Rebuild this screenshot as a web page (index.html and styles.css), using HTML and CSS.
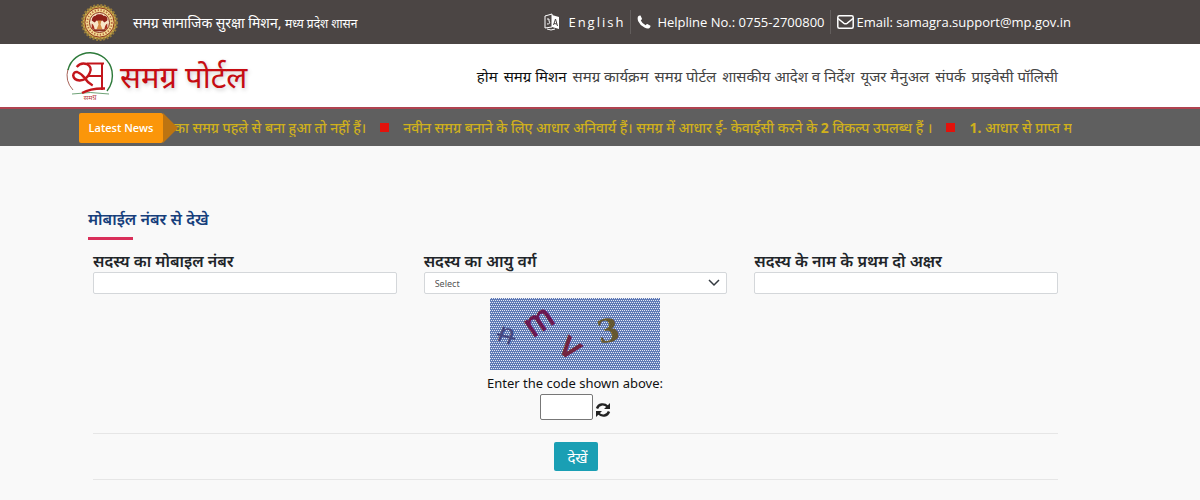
FILE: index.html
```html
<!DOCTYPE html>
<html lang="hi">
<head>
    <meta charset="UTF-8">
    <meta name="viewport" content="width=device-width, initial-scale=1.0">
    <title>समग्र पोर्टल</title>
    <link rel="stylesheet" href="styles.css">
</head>
<body>
    <!-- Top bar -->
    <div class="topbar">
        <div class="mission">
            <svg class="seal" viewBox="0 0 40 40" aria-hidden="true">
                <circle cx="20" cy="20" r="17.5" fill="#c9a94a" stroke="#94793a" stroke-width="3" stroke-dasharray="2 1.6"/>
                <circle cx="20" cy="20" r="15" fill="#f3dc93" stroke="#8b2f1c" stroke-width="1"/>
                <circle cx="20" cy="20" r="12.6" fill="none" stroke="#b9683f" stroke-width="1.8" stroke-dasharray="1.4 1.6"/>
                <circle cx="20" cy="20" r="10.3" fill="#f8e6c8" stroke="#8b2f1c" stroke-width="1"/>
                <path d="M12 18c0-3 2-5 4-5 1-2 7-2 8 0 3 0 5 2 4 5l-3 2-2-2-3 1-3-1-2 2z" fill="#8f2019"/>
                <path d="M12 21c2 1 3 4 3 7l-3-2zM28 21c-2 1-3 4-3 7l3-2z" fill="#a9301f"/>
                <path d="M18 18h4l-1 4 2 5h-6l2-5z" fill="#d68c45"/>
                <path d="M14 28h12" stroke="#8b2f1c" stroke-width="2"/>
            </svg>
            <span>समग्र सामाजिक सुरक्षा मिशन, <small>मध्य प्रदेश शासन</small></span>
        </div>
        <ul class="contact">
            <li>
                <a class="language" href="#">
                    <svg class="lang-icon" viewBox="0 0 16 18" aria-hidden="true">
                        <path d="M1 3l7-2v13l-7 1z" fill="none" stroke="#fff"/>
                        <path d="M8 2l7 2v12l-7-2z" fill="#fff"/>
                        <path d="M3 6q3-1 2 2 2 3-2 3" fill="none" stroke="#fff"/>
                        <path d="M9.500 12l2-6 2 7M10 10.500l3 .5" fill="none" stroke="#4b4544"/>
                        <path d="M3 16q4 2 8 0" fill="none" stroke="#fff"/>
                    </svg>
                    English
                </a>
            </li>
            <li>
                <svg class="phone-icon" viewBox="0 0 14 14" aria-hidden="true">
                    <path d="M1 1.500Q2 .3 3.500.5L5 3.800Q5 4.500 3.800 5.500 5.500 9 8.700 10.300 9.500 9 10.300 9l3.200 1.700Q13.700 12 12.500 13 10.500 14.200 7.500 12.600 2.800 10 1.200 6.200.2 3.500 1 1.500z" fill="#fff"/>
                </svg>
                Helpline No.: 0755-2700800
            </li>
            <li>
                <svg class="mail-icon" viewBox="0 0 17 14" aria-hidden="true">
                    <rect x=".8" y=".8" width="15.400" height="12.400" rx="1.500" fill="none" stroke="#fff" stroke-width="1.500"/>
                    <path d="M1 3.500l6 4.800q1.500 1 3 0l6-4.800" fill="none" stroke="#fff" stroke-width="1.500"/>
                </svg>
                Email: samagra.support@mp.gov.in
            </li>
        </ul>
    </div>

    <!-- Logo and menu -->
    <header class="header">
        <a class="brand" href="#">
            <svg class="logo" viewBox="0 0 48 50" aria-hidden="true">
                <path d="M7 39A22 22 0 0 1 2 18" fill="none" stroke="#a9645a" stroke-width="1"/>
                <path d="M2 19A22.500 22.500 0 0 1 46 20Q48 31 41 40" fill="none" stroke="#2d7a3a" stroke-width="1.400"/>
                <path d="M6 43q18-3 37 0" fill="none" stroke="#6fa377" stroke-width="1"/>
                <g fill="none" stroke="#c3161c" stroke-width="2.400">
                    <path d="M10.700 16q4-5 10-3 6 3 3 9-3 7-10 7.500-6-.5-6.500-5 .5-4 4-3.500 5 2 7.500 6 3 5 8 7.500"/>
                    <path d="M21 12.500h17M22 25h14M36 12v27" stroke-width="2"/>
                    <path d="M16 42q9-5 23-4.500"/>
                </g>
                <text class="logo-text" x="24" y="49" text-anchor="middle">समग्र</text>
            </svg>
            <span class="brand-name">समग्र पोर्टल</span>
        </a>
        <nav class="menu">
            <a class="active" href="#">होम</a>
            <a class="active" href="#">समग्र मिशन</a>
            <a href="#">समग्र कार्यक्रम</a>
            <a href="#">समग्र पोर्टल</a>
            <a href="#">शासकीय आदेश व निर्देश</a>
            <a href="#">यूजर मैनुअल</a>
            <a href="#">संपर्क</a>
            <a href="#">प्राइवेसी पॉलिसी</a>
        </nav>
    </header>

    <!-- News ticker -->
    <div class="news">
        <div class="news-label">Latest News</div>
        <div class="ticker">
            <span>का समग्र पहले से बना हुआ तो नहीं हैं।</span>
            <i class="dot"></i>
            <span>नवीन समग्र बनाने के लिए आधार अनिवार्य हैं। समग्र में आधार ई- केवाईसी करने के <b>2</b> विकल्प उपलब्ध हैं ।</span>
            <i class="dot"></i>
            <span><b>1.</b> आधार से प्राप्त म</span>
        </div>
    </div>

    <main class="content">
        <h1 class="title">मोबाईल नंबर से देखे</h1>
        <form class="search">
            <div class="fields">
                <div class="field">
                    <label for="mobile">सदस्य का मोबाइल नंबर</label>
                    <input type="tel" id="mobile">
                </div>
                <div class="field">
                    <label for="ageGroup">सदस्य का आयु वर्ग</label>
                    <select id="ageGroup">
                        <option>Select</option>
                    </select>
                </div>
                <div class="field">
                    <label for="firstLetters">सदस्य के नाम के प्रथम दो अक्षर</label>
                    <input type="text" id="firstLetters">
                </div>
            </div>

            <div class="captcha">
                <svg class="captcha-image" viewBox="0 0 170 72" role="img" aria-label="Captcha">
                    <defs>
                        <pattern id="weave" width="4" height="4" patternUnits="userSpaceOnUse">
                            <rect width="4" height="4" fill="#5f7ab5"/>
                            <path d="M0 0h1v1h-1zM2 0h1v1h-1zM1 2h1v1h-1zM3 2h1v1h-1z" fill="#e6eaf6"/>
                        </pattern>
                    </defs>
                    <rect width="170" height="72" fill="url(#weave)"/>
                    <g class="captcha-code">
                        <text transform="translate(6 42) rotate(20)" fill="#46477f" font-size="29">n</text>
                        <path d="M7 36l18 5" stroke="#46477f" stroke-width="2"/>
                        <text transform="translate(43 40) rotate(-34)" fill="#6c1750" stroke="#6c1750" font-size="34">m</text>
                        <text transform="translate(67 52) rotate(38)" fill="#73233f" stroke="#73233f" font-size="36">v</text>
                        <text class="serif" transform="translate(110 46) rotate(-12)" fill="#65582f" font-size="32">3</text>
                    </g>
                </svg>
                <label for="code">Enter the code shown above:</label>
                <div class="code-row">
                    <input type="text" id="code">
                    <button class="refresh" type="button" aria-label="Refresh">
                        <svg viewBox="0 0 16 16" aria-hidden="true">
                            <path d="M2 6.500C3.500 2 9 1 12.500 4.500M14 9.500C12.500 14 7 15 3.500 11.500" fill="none" stroke="#222" stroke-width="2.400"/>
                            <path d="M15 1v6H9zM1 15V9h6z" fill="#222"/>
                        </svg>
                    </button>
                </div>
            </div>

            <div class="actions">
                <button class="submit" type="submit">देखें</button>
            </div>
        </form>
    </main>
</body>
</html>
```

FILE: styles.css
```css
* {
    box-sizing: border-box;
}
body {
    margin: 0;
    background-color: #f9f9f9;
    color: #212529;
    font-family: "Noto Sans", "Noto Sans Devanagari", "Open Sans", sans-serif;
    font-size: 16px;
}
a {
    color: inherit;
    text-decoration: none;
}
input, select, button {
    font-family: inherit;
}

/* Top bar */
.topbar {
    display: flex;
    justify-content: space-between;
    align-items: center;
    height: 44px;
    padding: 0 129px 0 80px;
    background-color: #4b4544;
    color: #fff;
    white-space: nowrap;
}
.mission {
    display: flex;
    align-items: center;
    gap: 14px;
    font-size: 14px;
}
.mission small {
    font-size: 12px;
}
.seal {
    width: 39px;
    height: 39px;
}
.contact {
    display: flex;
    align-items: center;
    margin: 0;
    padding: 0;
    list-style: none;
    font-family: "Open Sans", sans-serif;
    font-size: 13px;
}
.contact li {
    display: flex;
    align-items: center;
    gap: 3px;
    height: 24px;
    padding: 0 5px 0 6px;
    border-left: 1px solid #625d5c;
}
.contact li:first-child {
    padding-left: 0;
    border-left: none;
}
.contact li:last-child {
    padding-right: 0;
}
.language {
    display: flex;
    align-items: center;
    gap: 8px;
    letter-spacing: 2px;
}
.lang-icon {
    width: 16px;
    height: 18px;
}
.phone-icon {
    width: 14px;
    height: 14px;
    margin-right: 3px;
}
.mail-icon {
    width: 17px;
    height: 14px;
}

/* Logo and menu */
.header {
    display: flex;
    justify-content: space-between;
    align-items: center;
    height: 65px;
    padding: 0 142px 0 66px;
    background-color: #fff;
    border-bottom: 2px solid #b04350;
    white-space: nowrap;
}
.brand {
    display: flex;
    align-items: center;
    gap: 6px;
}
.logo {
    width: 48px;
    height: 50px;
    overflow: visible;
}
.logo-text {
    fill: #b9403e;
    font-size: 7px;
}
.brand-name {
    color: #c60c12;
    font-size: 31px;
    line-height: 50px;
    text-shadow: 1px 2px 4px #ccc;
}
.menu {
    display: flex;
    gap: 6px;
    color: #444;
    font-size: 15px;
}
.menu .active {
    color: #111;
}

/* News ticker */
.news {
    display: flex;
    align-items: center;
    height: 37px;
    padding: 0 128px 0 79px;
    background-color: #5f5f5f;
}
.news-label {
    position: relative;
    flex: none;
    width: 84px;
    height: 30px;
    border-radius: 2px;
    background-color: #fb960a;
    color: #fff;
    font-family: "Open Sans", sans-serif;
    font-size: 11px;
    font-weight: 600;
    line-height: 30px;
    text-align: center;
}
.news-label::after {
    content: "";
    position: absolute;
    top: 0;
    left: 100%;
    border: 15px solid transparent;
    border-left-color: #bd7411;
    border-right-width: 0;
}
.ticker {
    display: flex;
    align-items: center;
    gap: 14px;
    flex: 1;
    min-width: 0;
    margin-left: 11px;
    overflow: hidden;
    color: #cfb01c;
    font-size: 14px;
    font-weight: 500;
    white-space: nowrap;
}
.dot {
    flex: none;
    width: 9px;
    height: 9px;
    background-color: #e3120b;
}

/* Search form */
.content {
    padding: 60px 142px 20px 88px;
}
.title {
    margin: 0;
    color: #173f7c;
    font-size: 16px;
    font-weight: 600;
    line-height: 27px;
}
.title::after {
    content: "";
    display: block;
    width: 45px;
    height: 3px;
    margin-top: 4px;
    background-color: #d92f5a;
}
.search {
    margin: 10px 0 0 5px;
}
.fields {
    display: grid;
    grid-template-columns: repeat(3, 1fr);
    gap: 27px;
}
.field label {
    display: block;
    font-weight: 600;
    line-height: 22px;
}
.field input, .field select {
    display: block;
    width: 100%;
    height: 22px;
    padding: 0 10px;
    border: 1px solid #d4d7da;
    border-radius: 2px;
    background-color: #fff;
    color: #555;
    font-size: 9px;
}
.field select {
    appearance: none;
    background: #fff url("data:image/svg+xml,%3Csvg xmlns='http://www.w3.org/2000/svg' width='12' height='8'%3E%3Cpath d='M1 1l5 5 5-5' fill='none' stroke='%23343a40' stroke-width='1.500'/%3E%3C/svg%3E") no-repeat right 6px center;
}
.captcha {
    display: flex;
    flex-direction: column;
    align-items: center;
    padding: 4px 1px 13px 0;
}
.captcha-image {
    width: 170px;
    height: 72px;
    overflow: visible;
}
.captcha-code {
    font-family: "Liberation Sans", sans-serif;
}
.captcha-code .serif {
    font-family: "DejaVu Serif", serif;
    font-weight: bold;
}
.captcha label {
    padding-top: 2px;
    color: #111;
    font-size: 13px;
    line-height: 22px;
}
.code-row {
    display: flex;
    align-items: center;
    gap: 2px;
}
#code {
    width: 53px;
    height: 26px;
    border: 1px solid #777;
    border-radius: 2px;
    background-color: #fff;
}
.refresh {
    display: flex;
    width: 16px;
    height: 16px;
    margin-top: 6px;
    padding: 0;
    border: none;
    background: none;
    cursor: pointer;
}
.actions {
    display: flex;
    justify-content: center;
    padding: 8px 0;
    border-top: 1px solid #e6e6e6;
    border-bottom: 1px solid #e6e6e6;
}
.submit {
    width: 44px;
    height: 29px;
    padding: 0 0 0 4px;
    border: none;
    border-radius: 2px;
    background-color: #1a9fb4;
    color: #fff;
    font-size: 15px;
    cursor: pointer;
}
.submit:hover {
    background-color: #138496;
}
```
